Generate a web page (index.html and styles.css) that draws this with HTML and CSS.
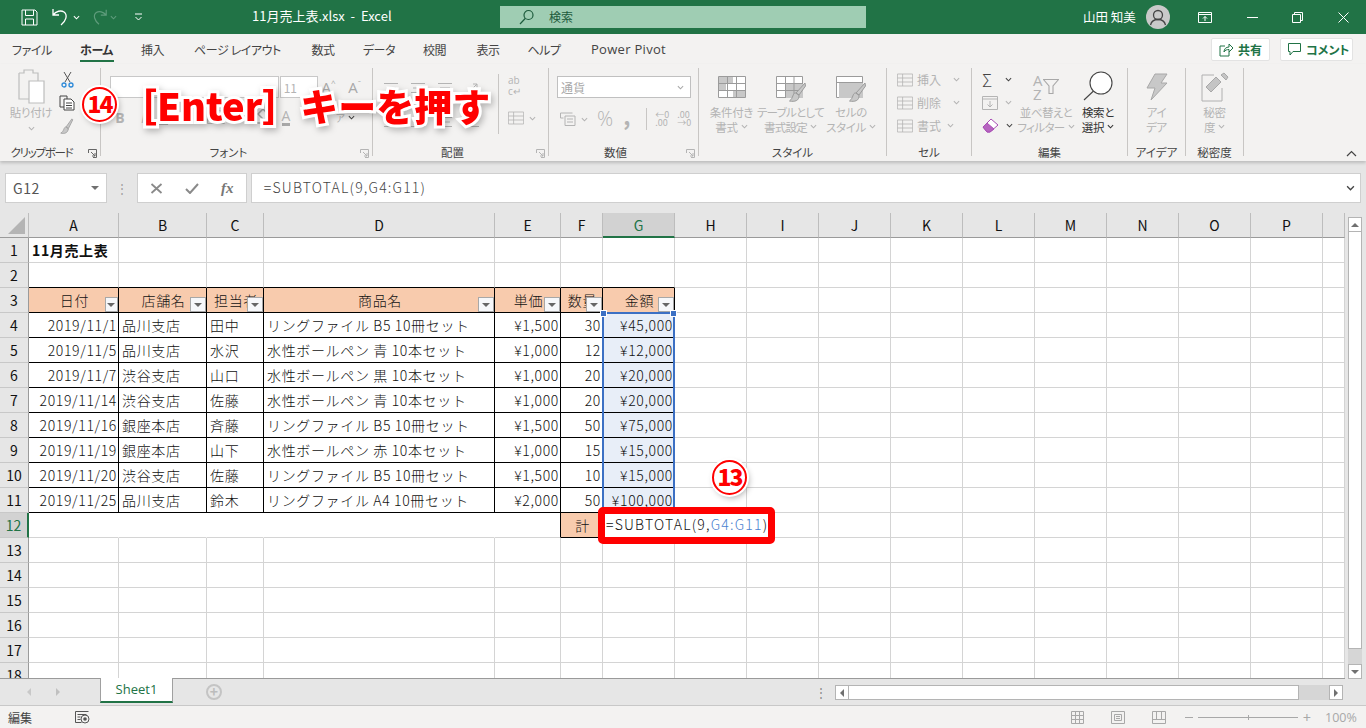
FILE: index.html
```html
<!DOCTYPE html>
<html lang="ja">

<head>
    <meta charset="UTF-8">
    <title>11月売上表.xlsx - Excel</title>
    <link rel="stylesheet" href="styles.css">
</head>

<body>
    <svg class="defs">
        <symbol id="chev" viewBox="0 0 8 5"><path d="M1 1l3 3 3-3" fill="none" stroke="currentColor" stroke-width="1.2"/></symbol>
        <symbol id="launch" viewBox="0 0 9 9"><path d="M.5 4V.5H8.5V8.5H5M3 3l4 4M7 4v3H4" fill="none" stroke="currentColor"/></symbol>
        <symbol id="lines" viewBox="0 0 16 12"><path d="M1 1.5h14M3 6h10M1 10.5h14" stroke="currentColor" fill="none"/></symbol>
        <symbol id="tblicon" viewBox="0 0 20 16"><path d="M.5.5h19v15H.5zM.5 5.5h19M.5 10.5h19M7 .5v15" stroke="currentColor" fill="none"/></symbol>
        <symbol id="brush" viewBox="0 0 14 18"><path d="M12.5 1L6 10l2.500 2L13.500 2zM6 10c-3 0-2 5-6 7 4 1 8 0 8.500-5z" fill="#c8c8c8" stroke="#a0a0a0"/></symbol>
    </svg>

    <header class="titlebar">
        <div class="qat">
            <svg class="ic-save" width="17" height="17" viewBox="0 0 17 17"><path d="M1 1h13l2 2v13H1zM4.500 1v5.500h8V1M4.500 16v-6h8v6" fill="none" stroke="#fff"/></svg>
            <svg class="ic-undo" width="20" height="18" viewBox="0 0 20 18"><path d="M2 1v6h6M2 7c3-4 8-5 11-3 4 3 2 9-3 13" fill="none" stroke="#fff" stroke-width="1.300"/></svg>
            <svg class="chev-w" width="7" height="5"><use href="#chev"/></svg>
            <svg class="ic-redo" width="18" height="18" viewBox="0 0 20 18"><path d="M18 1v6h-6M18 7c-3-4-8-5-11-3-4 3-2 9 3 13" fill="none" stroke="#5f9c7c" stroke-width="1.300"/></svg>
            <svg class="chev-d" width="7" height="5"><use href="#chev"/></svg>
            <svg class="ic-cust" width="9" height="8" viewBox="0 0 9 8"><path d="M1 1h7M1.500 4l3 3 3-3" fill="none" stroke="#fff"/></svg>
        </div>
        <div class="doc-title">11月売上表.xlsx&nbsp; - &nbsp;Excel</div>
        <div class="search">
            <svg width="16" height="16" viewBox="0 0 16 16"><circle cx="9.500" cy="6" r="4.500" fill="none" stroke="#1d5b3c" stroke-width="1.200"/><path d="M6.200 9.500L1 15" stroke="#1d5b3c" stroke-width="1.200"/></svg>
            <span>検索</span>
        </div>
        <div class="user">山田 知美</div>
        <div class="avatar">
            <svg width="24" height="24" viewBox="0 0 24 24"><circle cx="12" cy="10" r="4.500" fill="none" stroke="#444" stroke-width="1.300"/><path d="M4.500 20c1-4 4-5.500 7.500-5.500s6.500 1.500 7.500 5.500" fill="none" stroke="#444" stroke-width="1.300"/></svg>
        </div>
        <div class="winbtns">
            <svg width="14" height="11" viewBox="0 0 14 11"><path d="M.5.500h13v10H.5zM.5 2.500h13M7 9V4.500M5 6.500l2-2 2 2" fill="none" stroke="#fff"/></svg>
            <svg width="11" height="11" viewBox="0 0 11 11"><path d="M0 5.500h11" stroke="#fff"/></svg>
            <svg width="11" height="11" viewBox="0 0 11 11"><path d="M.5 2.500h8v8h-8zM2.500 2.500v-2h8v8h-2" fill="none" stroke="#fff"/></svg>
            <svg width="11" height="11" viewBox="0 0 11 11"><path d="M.5.500l10 10M10.500.500l-10 10" stroke="#fff"/></svg>
        </div>
    </header>

    <nav class="tabs">
        <div class="tab">ファイル</div>
        <div class="tab active">ホーム</div>
        <div class="tab">挿入</div>
        <div class="tab">ページ レイアウト</div>
        <div class="tab">数式</div>
        <div class="tab">データ</div>
        <div class="tab">校閲</div>
        <div class="tab">表示</div>
        <div class="tab">ヘルプ</div>
        <div class="tab latin">Power Pivot</div>
        <div class="tab-actions">
            <div class="tab-btn share">
                <svg width="14" height="14" viewBox="0 0 14 14"><path d="M6 3H1v10h9V9M5 9c0-3 2-5 5-5V1l4 4-4 4V6.500C8 6.500 6 7 5 9z" fill="none" stroke="#217346"/></svg>
                共有
            </div>
            <div class="tab-btn comment">
                <svg width="13" height="13" viewBox="0 0 13 13"><path d="M.5.500h12v8H5L2 12V8.500H.5z" fill="none" stroke="#217346"/></svg>
                コメント
            </div>
        </div>
    </nav>

    <section class="ribbon">
        <div class="grp g-clip">
            <div class="grp-body">
                <div class="big big-paste">
                    <div class="big-icon">
                        <svg width="27" height="36" viewBox="0 0 27 36"><path d="M1 4h5V1h9v3h5v8M1 4v26h10" fill="#f3f2f1" stroke="#bdbdbd" stroke-width="1.200"/><path d="M11 12h15v22H11z" fill="#fff" stroke="#bdbdbd" stroke-width="1.200"/></svg>
                    </div>
                    <div class="off">貼り付け</div>
                    <svg class="chev off" width="7" height="5"><use href="#chev"/></svg>
                </div>
                <div class="small-col clip-tools">
                    <svg width="13" height="17" viewBox="0 0 13 17"><path d="M3 1l6 10M10 1L4 11" stroke="#555" fill="none"/><circle cx="3" cy="14" r="2" fill="none" stroke="#2b88d8" stroke-width="1.300"/><circle cx="10" cy="14" r="2" fill="none" stroke="#2b88d8" stroke-width="1.300"/></svg>
                    <svg width="16" height="16" viewBox="0 0 16 16"><path d="M5 12H1V1h7v3" fill="none" stroke="#444"/><path d="M5 4h7l3 3v8H5zM7 8h6M7 10.500h6M7 13h6" fill="#fff" stroke="#444"/></svg>
                    <svg width="16" height="16"><use href="#brush"/></svg>
                </div>
            </div>
            <div class="grp-label on-label">クリップボード<svg class="launch" width="9" height="9"><use href="#launch"/></svg></div>
        </div>

        <div class="grp g-font">
            <div class="grp-body col">
                <div class="font-row">
                    <div class="combo font-name"><svg class="chev off" width="7" height="5"><use href="#chev"/></svg></div>
                    <div class="combo font-size off">11</div>
                    <span class="a-up off">A<small>^</small></span>
                    <span class="a-down off">A<small>ˇ</small></span>
                </div>
                <div class="font-tools off">
                    <b class="ft-b">B</b>
                    <i class="ft-i">I</i>
                    <u class="ft-u">U</u>
                    <svg class="ft-border" width="18" height="14"><use href="#tblicon"/></svg>
                    <svg class="ft-fill" width="18" height="18" viewBox="0 0 18 18"><path d="M9 1l6 6-5 5-6-6zM2 15h14" stroke="#a8a8a8" stroke-width="1.500" fill="none"/></svg>
                    <span class="ft-color">A</span>
                    <span class="ft-kana">ア</span>
                    <svg class="ft-kana-chev" width="7" height="5"><use href="#chev"/></svg>
                </div>
            </div>
            <div class="grp-label on-label">フォント<svg class="launch off" width="9" height="9"><use href="#launch"/></svg></div>
        </div>

        <div class="grp g-align">
            <div class="grp-body">
                <div class="align-grid off">
                    <svg width="16" height="12"><use href="#lines"/></svg>
                    <svg width="16" height="12"><use href="#lines"/></svg>
                    <svg width="16" height="12"><use href="#lines"/></svg>
                    <svg width="18" height="16" viewBox="0 0 18 16"><path d="M2 14L14 2M10 2h4v4" stroke="currentColor" fill="none"/></svg>
                    <svg width="16" height="12"><use href="#lines"/></svg>
                    <svg width="16" height="12"><use href="#lines"/></svg>
                    <svg width="16" height="12"><use href="#lines"/></svg>
                    <svg width="16" height="12"><use href="#lines"/></svg>
                </div>
                <div class="align-side off">
                    <span class="wrap-ic">ab<br>c↵</span>
                    <div class="merge-row">
                        <svg width="16" height="14"><use href="#tblicon"/></svg>
                        <svg width="7" height="5"><use href="#chev"/></svg>
                    </div>
                </div>
            </div>
            <div class="grp-label on-label">配置<svg class="launch off" width="9" height="9"><use href="#launch"/></svg></div>
        </div>

        <div class="grp g-num">
            <div class="grp-body col">
                <div class="combo num-fmt off">通貨<svg class="chev" width="7" height="5"><use href="#chev"/></svg></div>
                <div class="num-tools off">
                    <svg width="16" height="14" viewBox="0 0 16 14"><path d="M.5 1h12M.5 1v5h3M5 4h10v9.500H5zM7 7h6M7 10h6" stroke="currentColor" fill="none"/></svg>
                    <svg class="nt-chev" width="7" height="5"><use href="#chev"/></svg>
                    <span class="nt-pct">%</span>
                    <span class="nt-comma">,</span>
                    <span class="nt-dec">←0<br>.00</span>
                    <span class="nt-dec2">.00<br>→0</span>
                </div>
            </div>
            <div class="grp-label on-label">数値<svg class="launch off" width="9" height="9"><use href="#launch"/></svg></div>
        </div>

        <div class="grp g-style">
            <div class="grp-body style-row">
                <div class="big">
                    <div class="big-icon">
                        <svg width="28" height="22" viewBox="0 0 28 22"><path d="M.5.500h27v21H.5z" fill="#fff" stroke="#9b9b9b"/><path d="M1 1h14v6h-7v7H1zM15 14h12v7H15z" fill="#c8c8c8"/><path d="M.5 7.500h27M.5 14.500h27M9.500 0v22M18.500 0v22" stroke="#9b9b9b" fill="none"/></svg>
                    </div>
                    <div class="off">条件付き</div>
                    <div class="off">書式<svg class="chev" width="7" height="5"><use href="#chev"/></svg></div>
                </div>
                <div class="big big-table">
                    <div class="big-icon">
                        <svg class="style-ic" width="30" height="27" viewBox="0 0 30 27"><path d="M.5.500h26v21H.5z" fill="#fff" stroke="#9b9b9b"/><path d="M10 8h17v14H10z" fill="#c8c8c8"/><path d="M.5 7.500h26M.5 14.500h26M9.500 0v22M18 0v22" stroke="#9b9b9b" fill="none"/><path d="M29 7L20 17l3 2 6.500-9zM19.500 17c-3 0-2 5-6 8 5 1 10 0 9.500-6z" fill="#c8c8c8" stroke="#9b9b9b"/></svg>
                    </div>
                    <div class="off">テーブルとして</div>
                    <div class="off">書式設定<svg class="chev" width="7" height="5"><use href="#chev"/></svg></div>
                </div>
                <div class="big">
                    <div class="big-icon">
                        <svg class="style-ic" width="30" height="27" viewBox="0 0 30 27"><path d="M.5.500h26v21H.5z" fill="#fff" stroke="#9b9b9b"/><path d="M3 7h24v15H3z" fill="#c8c8c8"/><path d="M.5 6.500h26" stroke="#9b9b9b"/><path d="M29 7L20 17l3 2 6.500-9zM19.500 17c-3 0-2 5-6 8 5 1 10 0 9.500-6z" fill="#c8c8c8" stroke="#9b9b9b"/></svg>
                    </div>
                    <div class="off">セルの</div>
                    <div class="off">スタイル<svg class="chev" width="7" height="5"><use href="#chev"/></svg></div>
                </div>
            </div>
            <div class="grp-label on-label">スタイル</div>
        </div>

        <div class="grp g-cells">
            <div class="grp-body">
                <div class="small-col cells-col off">
                    <div class="cell-cmd"><svg width="16" height="14"><use href="#tblicon"/></svg>挿入<svg class="chev" width="7" height="5"><use href="#chev"/></svg></div>
                    <div class="cell-cmd"><svg width="16" height="14"><use href="#tblicon"/></svg>削除<svg class="chev" width="7" height="5"><use href="#chev"/></svg></div>
                    <div class="cell-cmd"><svg width="16" height="14"><use href="#tblicon"/></svg>書式<svg class="chev chev-tight" width="7" height="5"><use href="#chev"/></svg></div>
                </div>
            </div>
            <div class="grp-label on-label">セル</div>
        </div>

        <div class="grp g-edit">
            <div class="grp-body">
                <div class="small-col edit-col">
                    <div class="edit-cmd"><span class="sigma">Σ</span><svg width="7" height="5"><use href="#chev"/></svg></div>
                    <div class="edit-cmd off"><svg width="16" height="14" viewBox="0 0 16 14"><path d="M.5.500h15v13H.5zM.5 3h15M8 5v6M5.500 8.500L8 11l2.500-2.500" fill="none" stroke="currentColor"/></svg><svg width="7" height="5"><use href="#chev"/></svg></div>
                    <div class="edit-cmd"><svg width="17" height="15" viewBox="0 0 17 15"><path d="M1 9l8-8 7 6-8 7H5z" fill="#fff" stroke="#a94fb5"/><path d="M1 9l4-4 7 6-4 3H5z" fill="#b664c0" stroke="#a94fb5"/></svg><svg width="7" height="5"><use href="#chev"/></svg></div>
                </div>
                <div class="big big-sort">
                    <div class="big-icon">
                        <span class="az off">A<br>Z</span>
                        <svg width="16" height="15" viewBox="0 0 16 15"><path d="M.5.500h15L10 7v7.500H6V7z" fill="none" stroke="#a8a8a8" stroke-width="1.100"/></svg>
                    </div>
                    <div class="off">並べ替えと</div>
                    <div class="off">フィルター<svg class="chev" width="7" height="5"><use href="#chev"/></svg></div>
                </div>
                <div class="big big-find">
                    <div class="big-icon">
                        <svg width="30" height="30" viewBox="0 0 30 30"><circle cx="18" cy="12" r="11" fill="#fff" stroke="#444" stroke-width="1.100"/><path d="M10.500 20L1 29" stroke="#444" stroke-width="1.100"/></svg>
                    </div>
                    <div>検索と</div>
                    <div>選択<svg class="chev" width="7" height="5"><use href="#chev"/></svg></div>
                </div>
            </div>
            <div class="grp-label on-label">編集</div>
        </div>

        <div class="grp g-idea">
            <div class="grp-body">
                <div class="big">
                    <div class="big-icon">
                        <svg width="22" height="28" viewBox="0 0 22 28"><path d="M9 1h12l-6 9h6L5 27l4-12H1z" fill="#c8c8c8" stroke="#a8a8a8"/></svg>
                    </div>
                    <div class="off">アイ</div>
                    <div class="off">デア</div>
                </div>
            </div>
            <div class="grp-label on-label">アイデア</div>
        </div>

        <div class="grp g-secret">
            <div class="grp-body">
                <div class="big">
                    <div class="big-icon">
                        <svg width="28" height="30" viewBox="0 0 28 30"><path d="M1 3h12M1 3v26h20V16" fill="none" stroke="#b0b0b0"/><path d="M5 15L15 5l5 5-10 10zM20 3l3-2 4 4-2 3z" fill="#c4c4c4" stroke="#a8a8a8"/></svg>
                    </div>
                    <div class="off">秘密</div>
                    <div class="off">度<svg class="chev" width="7" height="5"><use href="#chev"/></svg></div>
                </div>
            </div>
            <div class="grp-label on-label">秘密度</div>
        </div>

        <svg class="collapse" width="11" height="7" viewBox="0 0 11 7"><path d="M1 6l4.500-4.500L10 6" fill="none" stroke="#444" stroke-width="1.200"/></svg>
    </section>

    <section class="formula-area">
        <div class="name-box">G12<span class="tri-down"></span></div>
        <div class="fb-dots">⋮</div>
        <div class="fx-box">
            <svg width="13" height="11" viewBox="0 0 13 11"><path d="M1.500 1l10 9M11.500 1l-10 9" stroke="#8a8a8a" stroke-width="1.800"/></svg>
            <svg width="14" height="11" viewBox="0 0 14 11"><path d="M1 6l4 4 8-9" fill="none" stroke="#8a8a8a" stroke-width="2"/></svg>
            <span class="fx">fx</span>
        </div>
        <div class="formula-input"><span class="formula-text">=SUBTOTAL(9,G4:G11)</span>
            <svg width="9" height="6"><use href="#chev"/></svg>
        </div>
    </section>

    <main class="sheet-wrap">
        <div class="sheet">
            <table>
                <colgroup>
                    <col class="c-rh"><col class="c-a"><col class="c-b"><col class="c-c"><col class="c-d"><col class="c-e"><col class="c-f">
                    <col class="c-n"><col class="c-n"><col class="c-n"><col class="c-n"><col class="c-n"><col class="c-n"><col class="c-n"><col class="c-n"><col class="c-n"><col class="c-n"><col class="c-q">
                </colgroup>
                <tr class="col-heads">
                    <th class="corner"><span class="corner-tri"></span></th>
                    <th>A</th><th>B</th><th>C</th><th>D</th><th>E</th><th>F</th><th class="cur">G</th><th>H</th><th>I</th><th>J</th><th>K</th><th>L</th><th>M</th><th>N</th><th>O</th><th>P</th><th></th>
                </tr>
                <tr>
                    <th class="rh">1</th><td class="title">11月売上表</td><td></td><td></td><td></td><td></td><td></td><td></td><td></td><td></td><td></td><td></td><td></td><td></td><td></td><td></td><td></td><td></td>
                </tr>
                <tr>
                    <th class="rh">2</th><td class="tb"></td><td class="tb"></td><td class="tb"></td><td class="tb"></td><td class="tb"></td><td class="tb"></td><td class="tb"></td><td></td><td></td><td></td><td></td><td></td><td></td><td></td><td></td><td></td><td></td>
                </tr>
                <tr>
                    <th class="rh">3</th>
                    <td class="bk head">日付<span class="fbtn narrow"></span></td>
                    <td class="bk head">店舗名<span class="fbtn"></span></td>
                    <td class="bk head">担当者<span class="fbtn"></span></td>
                    <td class="bk head">商品名<span class="fbtn"></span></td>
                    <td class="bk head">単価<span class="fbtn"></span></td>
                    <td class="bk head">数量<span class="fbtn"></span></td>
                    <td class="bk head">金額<span class="fbtn"></span></td>
                    <td></td><td></td><td></td><td></td><td></td><td></td><td></td><td></td><td></td><td></td>
                </tr>
                <tr>
                    <th class="rh">4</th><td class="bk r">2019/11/1</td><td class="bk">品川支店</td><td class="bk">田中</td><td class="bk">リングファイル B5 10冊セット</td><td class="bk r">¥1,500</td><td class="bk r">30</td><td class="bk r sel">¥45,000</td>
                    <td></td><td></td><td></td><td></td><td></td><td></td><td></td><td></td><td></td><td></td>
                </tr>
                <tr>
                    <th class="rh">5</th><td class="bk r">2019/11/5</td><td class="bk">品川支店</td><td class="bk">水沢</td><td class="bk">水性ボールペン 青 10本セット</td><td class="bk r">¥1,000</td><td class="bk r">12</td><td class="bk r sel">¥12,000</td>
                    <td></td><td></td><td></td><td></td><td></td><td></td><td></td><td></td><td></td><td></td>
                </tr>
                <tr>
                    <th class="rh">6</th><td class="bk r">2019/11/7</td><td class="bk">渋谷支店</td><td class="bk">山口</td><td class="bk">水性ボールペン 黒 10本セット</td><td class="bk r">¥1,000</td><td class="bk r">20</td><td class="bk r sel">¥20,000</td>
                    <td></td><td></td><td></td><td></td><td></td><td></td><td></td><td></td><td></td><td></td>
                </tr>
                <tr>
                    <th class="rh">7</th><td class="bk r">2019/11/14</td><td class="bk">渋谷支店</td><td class="bk">佐藤</td><td class="bk">水性ボールペン 青 10本セット</td><td class="bk r">¥1,000</td><td class="bk r">20</td><td class="bk r sel">¥20,000</td>
                    <td></td><td></td><td></td><td></td><td></td><td></td><td></td><td></td><td></td><td></td>
                </tr>
                <tr>
                    <th class="rh">8</th><td class="bk r">2019/11/16</td><td class="bk">銀座本店</td><td class="bk">斉藤</td><td class="bk">リングファイル B5 10冊セット</td><td class="bk r">¥1,500</td><td class="bk r">50</td><td class="bk r sel">¥75,000</td>
                    <td></td><td></td><td></td><td></td><td></td><td></td><td></td><td></td><td></td><td></td>
                </tr>
                <tr>
                    <th class="rh">9</th><td class="bk r">2019/11/19</td><td class="bk">銀座本店</td><td class="bk">山下</td><td class="bk">水性ボールペン 赤 10本セット</td><td class="bk r">¥1,000</td><td class="bk r">15</td><td class="bk r sel">¥15,000</td>
                    <td></td><td></td><td></td><td></td><td></td><td></td><td></td><td></td><td></td><td></td>
                </tr>
                <tr>
                    <th class="rh">10</th><td class="bk r">2019/11/20</td><td class="bk">渋谷支店</td><td class="bk">佐藤</td><td class="bk">リングファイル B5 10冊セット</td><td class="bk r">¥1,500</td><td class="bk r">10</td><td class="bk r sel">¥15,000</td>
                    <td></td><td></td><td></td><td></td><td></td><td></td><td></td><td></td><td></td><td></td>
                </tr>
                <tr>
                    <th class="rh">11</th><td class="bk r">2019/11/25</td><td class="bk">品川支店</td><td class="bk">鈴木</td><td class="bk">リングファイル A4 10冊セット</td><td class="bk r">¥2,000</td><td class="bk r">50</td><td class="bk r sel">¥100,000</td>
                    <td></td><td></td><td></td><td></td><td></td><td></td><td></td><td></td><td></td><td></td>
                </tr>
                <tr>
                    <th class="rh cur">12</th><td class="nb"></td><td class="nb"></td><td class="nb"></td><td class="nb"></td><td class="rb"></td><td class="bk head">計</td><td></td>
                    <td></td><td></td><td></td><td></td><td></td><td></td><td></td><td></td><td></td><td></td>
                </tr>
                <tr>
                    <th class="rh">13</th><td></td><td></td><td></td><td></td><td></td><td></td><td></td><td></td><td></td><td></td><td></td><td></td><td></td><td></td><td></td><td></td><td></td>
                </tr>
                <tr>
                    <th class="rh">14</th><td></td><td></td><td></td><td></td><td></td><td></td><td></td><td></td><td></td><td></td><td></td><td></td><td></td><td></td><td></td><td></td><td></td>
                </tr>
                <tr>
                    <th class="rh">15</th><td></td><td></td><td></td><td></td><td></td><td></td><td></td><td></td><td></td><td></td><td></td><td></td><td></td><td></td><td></td><td></td><td></td>
                </tr>
                <tr>
                    <th class="rh">16</th><td></td><td></td><td></td><td></td><td></td><td></td><td></td><td></td><td></td><td></td><td></td><td></td><td></td><td></td><td></td><td></td><td></td>
                </tr>
                <tr>
                    <th class="rh">17</th><td></td><td></td><td></td><td></td><td></td><td></td><td></td><td></td><td></td><td></td><td></td><td></td><td></td><td></td><td></td><td></td><td></td>
                </tr>
                <tr>
                    <th class="rh">18</th><td></td><td></td><td></td><td></td><td></td><td></td><td></td><td></td><td></td><td></td><td></td><td></td><td></td><td></td><td></td><td></td><td></td>
                </tr>
            </table>
        </div>
        <div class="vscroll">
            <div class="sb-btn"><span class="tri-up"></span></div>
            <div class="sb-thumb"></div>
            <div class="sb-track"></div>
            <div class="sb-btn"><span class="tri-down"></span></div>
        </div>
    </main>

    <section class="sheet-tabs">
        <div class="nav-arrows"><span class="tri-left"></span><span class="tri-right dim"></span></div>
        <div class="sheet-tab">Sheet1</div>
        <div class="add-sheet">+</div>
        <div class="hdots">⋮</div>
        <div class="hscroll">
            <div class="sb-btn"><span class="tri-left dark"></span></div>
            <div class="hs-thumb"></div>
            <div class="hs-track"></div>
            <div class="sb-btn"><span class="tri-right"></span></div>
        </div>
    </section>

    <footer class="statusbar">
        <span class="st-mode">編集</span>
        <svg class="st-macro" width="15" height="13" viewBox="0 0 15 13"><path d="M.5.500h13M.5.500v11h6M2.500 3.500h9M2.500 6h3M2.500 8.500h3" fill="none" stroke="#555"/><circle cx="10" cy="8" r="4" fill="none" stroke="#555"/><circle cx="10" cy="8" r="1.800" fill="#555"/></svg>
        <div class="st-right">
            <svg width="13" height="13" viewBox="0 0 13 13"><path d="M.5.500h12v12H.5zM.5 4.500h12M.5 8.500h12M4.500 0v13M8.500 0v13" fill="none" stroke="#a8a8a8"/></svg>
            <svg width="14" height="13" viewBox="0 0 14 13"><path d="M.5.500h13v12H.5zM3.500 3.500h7v6h-7zM5 5.500h4M5 7.500h4" fill="none" stroke="#a8a8a8"/></svg>
            <svg width="14" height="13" viewBox="0 0 14 13"><path d="M.5.500h13v12H.5zM.5 8.500h13M4.500 0v8.500M9.500 0v8.500" fill="none" stroke="#a8a8a8"/></svg>
            <span class="zoom-minus"></span>
            <div class="zoom-track"><span class="zoom-tick"></span></div>
            <span class="zoom-plus">+</span>
            <span class="zoom-val">100%</span>
        </div>
    </footer>

    <!-- annotations over the sheet -->
    <div class="range-box"><span class="hdl hdl-l"></span><span class="hdl hdl-r"></span></div>
    <div class="note note-14"><span class="circle-no">14</span><span class="note-text">［Enter］キーを押す</span></div>
    <div class="circle-no note-13">13</div>
    <div class="edit-box">=SUBTOTAL(9,<span class="ref">G4:G11</span>)</div>
</body>

</html>
```

FILE: styles.css
```css
/* Page */
* {
    box-sizing: border-box;
}

body {
    margin: 0;
    width: 1366px;
    height: 728px;
    overflow: hidden;
    position: relative;
    display: flex;
    flex-direction: column;
    background-color: #e6e6e6;
    color: #444;
    font-family: "Noto Sans CJK JP", "Noto Sans", sans-serif;
    font-size: 12px;
}

.defs {
    position: absolute;
    width: 0;
    height: 0;
}

svg {
    display: block;
    flex: none;
}

.off {
    color: #b4b4b4;
}

/* Title bar */
.titlebar {
    height: 34px;
    flex: none;
    display: flex;
    align-items: center;
    background-color: #217346;
    color: #fff;
}

.qat {
    width: 252px;
    display: flex;
    align-items: center;
    padding-left: 21px;
}

.ic-undo {
    margin-left: 13px;
}

.chev-w {
    margin-left: 2px;
    color: #fff;
}

.ic-redo {
    margin-left: 10px;
}

.chev-d {
    margin-left: 2px;
    color: #5f9c7c;
}

.ic-cust {
    margin-left: 17px;
}

.doc-title {
    width: 248px;
    margin-top: -4px;
    font-size: 13px;
    font-family: "Noto Sans CJK JP", sans-serif;
}

.search {
    width: 366px;
    height: 22px;
    display: flex;
    align-items: center;
    padding-left: 19px;
    background-color: #9fcdb3;
    color: #1d5b3c;
}

.search span {
    margin: -2px 0 0 14px;
}

.user {
    width: 52px;
    margin: -2px 0 0 217px;
    white-space: nowrap;
    font-size: 12.500px;
}

.avatar {
    width: 24px;
    height: 24px;
    margin-left: 11px;
    border-radius: 50%;
    background-color: #c9c9c9;
}

.winbtns {
    display: flex;
    align-items: center;
    margin-left: 28px;
}

.winbtns svg:nth-child(2) {
    margin-left: 35px;
}

.winbtns svg:nth-child(3) {
    margin-left: 34px;
}

.winbtns svg:nth-child(4) {
    margin-left: 35px;
}

/* Ribbon tabs */
.tabs {
    height: 30px;
    flex: none;
    display: grid;
    grid-template-columns: 64px 65px 47px 123px 48px 64px 47px 60px 52px 117px 1fr;
    background-color: #f3f2f1;
}

.tab {
    position: relative;
    text-align: center;
    line-height: 31px;
    font-size: 12px;
    letter-spacing: -0.4px;
    font-feature-settings: "palt";
    white-space: nowrap;
}

.tab.latin {
    font-family: "Open Sans", sans-serif;
    font-size: 13px;
    letter-spacing: 0.3px;
}

.tab.active {
    font-weight: 700;
    color: #333;
}

.tab.active::after {
    content: "";
    position: absolute;
    left: 16px;
    right: 15px;
    bottom: 3px;
    height: 2px;
    background-color: #217346;
}

.tab-actions {
    display: flex;
    justify-content: flex-end;
    align-items: flex-start;
    gap: 10px;
    padding: 4px 13px 0 0;
}

.tab-btn {
    height: 23px;
    display: flex;
    align-items: center;
    gap: 5px;
    background-color: #fff;
    border: 1px solid #e3e3e3;
    border-radius: 2px;
    color: #217346;
    font-weight: 700;
    font-feature-settings: "palt";
}

.share {
    width: 59px;
    padding-left: 7px;
}

.comment {
    width: 73px;
    padding-left: 7px;
}

/* Ribbon */
.ribbon {
    height: 97px;
    flex: none;
    position: relative;
    z-index: 1;
    display: grid;
    grid-template-columns: 101px 272px 176px 150px 188px 85px 156px 58px 58px;
    padding-top: 4px;
    background-color: #f3f2f1;
    box-shadow: 0 2px 3px rgba(0, 0, 0, 0.18);
    font-feature-settings: "palt";
}

.grp {
    height: 88px;
    display: flex;
    flex-direction: column;
    border-right: 1px solid #c8c6c4;
}

.grp-body {
    height: 72px;
    display: flex;
}

.grp-body.col {
    flex-direction: column;
}

.grp-label {
    position: relative;
    height: 16px;
    line-height: 24px;
    text-align: center;
    color: #444;
    white-space: nowrap;
    font-size: 11.500px;
}

.g-clip .grp-label {
    padding-right: 17px;
    letter-spacing: -1.300px;
}

.g-font .grp-label,
.g-align .grp-label,
.g-num .grp-label {
    padding-right: 16px;
}

.launch {
    position: absolute;
    right: 3px;
    top: 9px;
    color: #666;
}

.launch.off {
    color: #b4b4b4;
}

.big {
    display: flex;
    flex-direction: column;
    align-items: center;
    line-height: 14.500px;
    font-size: 11.500px;
    letter-spacing: -0.3px;
    white-space: nowrap;
}

.big div {
    display: flex;
    align-items: center;
    justify-content: center;
}

.big .chev {
    margin-left: 3px;
}

.big-icon {
    height: 37px;
    flex: none;
}

.big-paste {
    width: 52px;
    margin-left: 5px;
}

.big-paste .chev {
    margin: 6px 0 0 0;
}

.big-table {
    letter-spacing: -0.700px;
}

.style-ic {
    margin: 5px 0 0 0;
}

.small-col {
    display: flex;
    flex-direction: column;
}

.clip-tools {
    width: 20px;
    align-items: center;
    gap: 7px;
    padding-top: 3px;
}

/* Font group */
.font-row {
    display: flex;
    align-items: center;
    padding: 8px 0 0 9px;
}

.combo {
    height: 22px;
    display: flex;
    align-items: center;
    justify-content: space-between;
    padding: 0 6px 0 3px;
    background-color: #fff;
    border: 1px solid #c8c8c8;
}

.font-name {
    width: 170px;
    justify-content: flex-end;
}

.font-size {
    width: 39px;
    margin-left: 1px;
}

.a-up,
.a-down {
    display: flex;
    width: 27px;
    padding-left: 3px;
    color: #a8a8a8;
    line-height: 20px;
    font-size: 15px;
    font-family: "Open Sans", sans-serif;
}

.a-up small,
.a-down small {
    font-size: 8px;
    line-height: 12px;
}

.font-tools {
    display: grid;
    grid-template-columns: 20px 26px 14px 33px 26px 20px 28px 18px 50px 12px;
    align-items: center;
    justify-items: center;
    height: 20px;
    margin: 9px 0 0 9px;
    font-family: "Open Sans", sans-serif;
    font-size: 14px;
}

.ft-b { grid-column: 1; }
.ft-i { grid-column: 2; }
.ft-u { grid-column: 3; }
.ft-border { grid-column: 5; }
.ft-fill { grid-column: 7; }
.ft-color { grid-column: 8; border-bottom: 3px solid #a8a8a8; line-height: 15px; }
.ft-kana { grid-column: 9; justify-self: end; font-size: 10px; font-family: "Noto Sans CJK JP", sans-serif; }
.ft-kana-chev { grid-column: 10; color: #444; }

/* Alignment group */
.align-grid {
    width: 116px;
    margin: 14px 0 0 4px;
    display: grid;
    grid-template-columns: repeat(4, 27px);
    grid-auto-rows: 34px;
    justify-items: center;
}

.align-side {
    width: 48px;
    margin-left: 5px;
    border-left: 1px solid #c8c6c4;
    height: 60px;
    margin-top: 6px;
    padding: 1px 0 0 9px;
}

.wrap-ic {
    display: block;
    height: 26px;
    font-size: 10px;
    line-height: 11px;
    font-family: "Open Sans", sans-serif;
}

.merge-row {
    display: flex;
    align-items: center;
    gap: 5px;
    margin-top: 10px;
}

/* Number group */
.num-fmt {
    width: 134px;
    margin: 8px 0 0 8px;
    color: #a8a8a8;
    border-color: #c0c0c0;
}

.num-tools {
    display: flex;
    align-items: center;
    height: 22px;
    margin: 10px 0 0 11px;
}

.nt-chev {
    margin-left: 5px;
}

.nt-pct {
    margin-left: 9px;
    font-size: 20px;
    font-weight: 300;
    line-height: 22px;
    font-family: "Open Sans", sans-serif;
}

.nt-comma {
    margin-left: 10px;
    width: 24px;
    height: 22px;
    border-right: 1px solid #c8c6c4;
    font-size: 22px;
    font-weight: 700;
    line-height: 15px;
}

.nt-dec,
.nt-dec2 {
    margin-left: 8px;
    font-size: 9px;
    line-height: 8px;
    white-space: nowrap;
}

/* Styles group */
.style-row {
    padding-left: 3px;
}

.style-row .big:nth-child(1),
.style-row .big:nth-child(2) {
    width: 59px;
}

.style-row .big:nth-child(3) {
    width: 62px;
}

/* Cells group */
.cells-col {
    padding: 0 0 0 10px;
}

.cell-cmd {
    height: 23px;
    display: flex;
    align-items: center;
    gap: 4px;
    font-size: 12px;
}

.cell-cmd .chev {
    margin-left: 8px;
}

.cell-cmd .chev-tight {
    margin-left: 2px;
}

/* Editing group */
.edit-col {
    width: 44px;
    padding-left: 10px;
}

.edit-cmd {
    height: 23px;
    display: flex;
    align-items: center;
    gap: 7px;
}

.sigma {
    width: 16px;
    font-size: 17px;
    font-weight: 300;
    line-height: 20px;
}

.big-sort {
    width: 60px;
    letter-spacing: -0.600px;
}

.big-sort .big-icon {
    gap: 1px;
}

.az {
    font-size: 15px;
    line-height: 14px;
    font-family: "Open Sans", sans-serif;
}

.big-find {
    width: 44px;
    color: #333;
}

.big-find .big-icon {
    align-items: flex-start;
    padding-top: 3px;
}

.g-idea .big,
.g-secret .big {
    width: 57px;
}

.collapse {
    position: absolute;
    right: 9px;
    bottom: 4px;
}

/* Formula bar */
.formula-area {
    height: 52px;
    flex: none;
    display: flex;
    padding: 12px 5px 0;
    background-color: #e6e6e6;
}

.name-box,
.fx-box,
.formula-input {
    height: 30px;
    display: flex;
    align-items: center;
    background-color: #fff;
    border: 1px solid #cfcfcf;
}

.name-box {
    width: 102px;
    justify-content: space-between;
    padding: 0 7px 0 7px;
    color: #555;
    font-size: 14px;
    letter-spacing: 0.5px;
    line-height: 26px;
}

.fb-dots {
    width: 30px;
    text-align: center;
    line-height: 30px;
    color: #a0a0a0;
}

.fx-box {
    width: 110px;
    padding-left: 12px;
    gap: 22px;
}

.fx {
    font-family: "Liberation Serif", serif;
    font-style: italic;
    font-weight: 700;
    font-size: 15px;
    color: #777;
}

.formula-input {
    width: 1111px;
    margin-left: 4px;
    padding: 0 5px 0 12px;
    justify-content: space-between;
}

.formula-text {
    margin-top: -3px;
    font-size: 14px;
    font-weight: 300;
    letter-spacing: 1.200px;
}

/* Sheet */
.sheet-wrap {
    height: 466px;
    flex: none;
    display: flex;
}

.sheet {
    width: 1345px;
    height: 466px;
    overflow: hidden;
    border-bottom: 1px solid #9a9a9a;
    background-color: #fff;
}

table {
    width: 1345px;
    table-layout: fixed;
    border-collapse: separate;
    border-spacing: 0;
    font-size: 14px;
    color: #111;
}

.c-rh { width: 29px; }
.c-a { width: 90px; }
.c-b { width: 88px; }
.c-c { width: 57px; }
.c-d { width: 231px; }
.c-e { width: 66px; }
.c-f { width: 42px; }
.c-n { width: 72px; }
.c-q { width: 22px; }

th,
td {
    height: 25px;
    padding: 0;
    overflow: hidden;
    white-space: nowrap;
    font-weight: 400;
    line-height: 22px;
}

td {
    padding: 0 1px 1px 3px;
    border-right: 1px solid #d4d4d4;
    border-bottom: 1px solid #d4d4d4;
    font-weight: 300;
    letter-spacing: 0.650px;
}

.col-heads th {
    background-color: #e6e6e6;
    border-right: 1px solid #bdbdbd;
    border-bottom: 1px solid #9a9a9a;
    font-size: 14px;
}

.col-heads th.cur {
    background-color: #d2d2d2;
    border-bottom: 2px solid #217346;
    color: #217346;
}

.corner {
    position: relative;
}

.corner-tri {
    position: absolute;
    right: 3px;
    bottom: 3px;
    border-style: solid;
    border-width: 0 0 17px 17px;
    border-color: transparent transparent #b4b4b4 transparent;
}

.rh {
    background-color: #e6e6e6;
    border-right: 1px solid #9a9a9a;
    border-bottom: 1px solid #c8c8c8;
    font-size: 14px;
}

.rh.cur {
    background-color: #d2d2d2;
    border-right: 2px solid #217346;
    color: #217346;
}

td.title {
    overflow: visible;
    font-weight: 700;
}

.tb {
    border-bottom-color: #000;
}

.nb {
    border-right-color: transparent;
}

.rb {
    border-right-color: #000;
}

.bk {
    border-right-color: #000;
    border-bottom-color: #000;
}

.r {
    text-align: right;
}

.head {
    position: relative;
    background-color: #f8cbad;
    text-align: center;
}

.sel {
    background-color: #e8eef8;
}

.fbtn {
    position: absolute;
    right: 0;
    bottom: 0;
    width: 16px;
    height: 15px;
    background-color: #f6f7fa;
    border: 1px solid #a8a8a8;
}

.fbtn.narrow {
    width: 13px;
}

.fbtn::after {
    content: "";
    position: absolute;
    left: 3px;
    top: 5px;
    border-style: solid;
    border-width: 4px 4px 0 4px;
    border-color: #666 transparent transparent transparent;
}

.fbtn.narrow::after {
    left: 1px;
}

/* Scrollbars */
.vscroll {
    width: 21px;
    display: flex;
    flex-direction: column;
    padding: 4px 4px 0 3px;
}

.sb-btn {
    width: 14px;
    height: 15px;
    flex: none;
    display: flex;
    align-items: center;
    justify-content: center;
    background-color: #fff;
    border: 1px solid #b4b4b4;
}

.sb-thumb {
    height: 417px;
    background-color: #fff;
    border: 1px solid #b4b4b4;
    border-top: none;
}

.sb-track {
    flex: 1;
    background-color: #d6d6d6;
}

.tri-down {
    border-style: solid;
    border-width: 4px 4px 0 4px;
    border-color: #707070 transparent transparent transparent;
}

.tri-up {
    border-style: solid;
    border-width: 0 4px 4px 4px;
    border-color: transparent transparent #707070 transparent;
}

.tri-left {
    border-style: solid;
    border-width: 4px 4px 4px 0;
    border-color: transparent #c8c8c8 transparent transparent;
}

.tri-left.dark {
    border-right-color: #707070;
}

.tri-right {
    border-style: solid;
    border-width: 4px 0 4px 4px;
    border-color: transparent transparent transparent #707070;
}

.tri-right.dim {
    border-left-color: #c0c0c0;
}

/* Sheet tabs */
.sheet-tabs {
    height: 27px;
    flex: none;
    display: flex;
    align-items: flex-start;
    border-bottom: 1px solid #c8c8c8;
    background-color: #e6e6e6;
}

.nav-arrows {
    width: 100px;
    height: 26px;
    display: flex;
    align-items: center;
    gap: 25px;
    padding-left: 27px;
}

.sheet-tab {
    width: 73px;
    height: 25px;
    margin-top: -1px;
    background-color: #fff;
    border: 1px solid #a0a0a0;
    border-top: none;
    border-bottom: 2px solid #217346;
    text-align: center;
    line-height: 23px;
    color: #217346;
    font-size: 13px;
    font-family: "Open Sans", sans-serif;
}

.add-sheet {
    width: 16px;
    height: 16px;
    margin: 5px 0 0 33px;
    border: 2px solid #c4c4c4;
    border-radius: 50%;
    color: #bcbcbc;
    font-size: 14px;
    font-weight: 700;
    line-height: 11px;
    text-align: center;
}

.hdots {
    margin-left: 593px;
    line-height: 26px;
    color: #8a8a8a;
}

.hscroll {
    width: 508px;
    display: flex;
    margin: 6px 0 0 8px;
}

.hs-thumb {
    flex: none;
    width: 450px;
    background-color: #fff;
    border: 1px solid #b4b4b4;
    border-left: none;
}

.hs-track {
    flex: 1;
    background-color: #d6d6d6;
}

/* Status bar */
.statusbar {
    height: 22px;
    flex: none;
    display: flex;
    align-items: center;
    background-color: #f3f2f1;
}

.st-mode {
    margin-left: 8px;
    font-size: 12px;
}

.st-macro {
    margin-left: 43px;
}

.st-right {
    margin-left: auto;
    display: flex;
    align-items: center;
    color: #a8a8a8;
}

.st-right svg:nth-child(2),
.st-right svg:nth-child(3) {
    margin-left: 27px;
}

.zoom-minus {
    width: 8px;
    height: 1px;
    margin-left: 19px;
    background-color: #a8a8a8;
}

.zoom-track {
    position: relative;
    width: 100px;
    height: 1px;
    margin-left: 5px;
    background-color: #a8a8a8;
}

.zoom-tick {
    position: absolute;
    left: 50px;
    top: -2px;
    width: 1px;
    height: 5px;
    background-color: #a8a8a8;
}

.zoom-plus {
    margin-left: 3px;
    width: 12px;
    text-align: center;
    font-size: 14px;
    line-height: 14px;
}

.zoom-val {
    width: 33px;
    margin: 0 8px 0 12px;
    font-family: "Open Sans", sans-serif;
    font-size: 12.500px;
}

/* Annotations */
.range-box {
    position: absolute;
    left: 602px;
    top: 312px;
    width: 73px;
    height: 201px;
    border: 2px solid #3c70c4;
}

.hdl {
    position: absolute;
    top: -3px;
    width: 5px;
    height: 5px;
    background-color: #3c70c4;
    outline: 1px solid #fff;
}

.hdl-l {
    left: -3px;
}

.hdl-r {
    right: -3px;
}

.circle-no {
    display: block;
    width: 35px;
    height: 35px;
    flex: none;
    border: 2px solid #f00;
    border-radius: 50%;
    background-color: #fff;
    box-shadow: 0 0 0 2px #fff, 2px 3px 6px rgba(0, 0, 0, 0.3);
    color: #f00;
    text-align: center;
    font-size: 23px;
    font-weight: 900;
    letter-spacing: -2px;
    line-height: 29px;
}

.note {
    position: absolute;
    z-index: 2;
    left: 82px;
    top: 80px;
    display: flex;
    align-items: flex-start;
    white-space: nowrap;
}

.note-14 .circle-no {
    margin-top: 7px;
}

.note-text {
    margin-left: 2px;
    color: #f00;
    font-size: 38px;
    font-weight: 900;
    line-height: 50px;
    -webkit-text-stroke: 6px #fff;
    paint-order: stroke fill;
    filter: drop-shadow(2px 3px 3px rgba(0, 0, 0, 0.25));
}

.note-13 {
    position: absolute;
    z-index: 2;
    left: 712px;
    top: 460px;
}

.edit-box {
    position: absolute;
    left: 598px;
    top: 507px;
    width: 177px;
    height: 37px;
    padding-left: 1px;
    background-color: #fff;
    border: 7px solid #f00;
    border-radius: 5px;
    font-size: 14px;
    font-weight: 300;
    letter-spacing: 1.200px;
    line-height: 21px;
    white-space: nowrap;
    color: #111;
}

.ref {
    color: #4a7fd0;
}
```
